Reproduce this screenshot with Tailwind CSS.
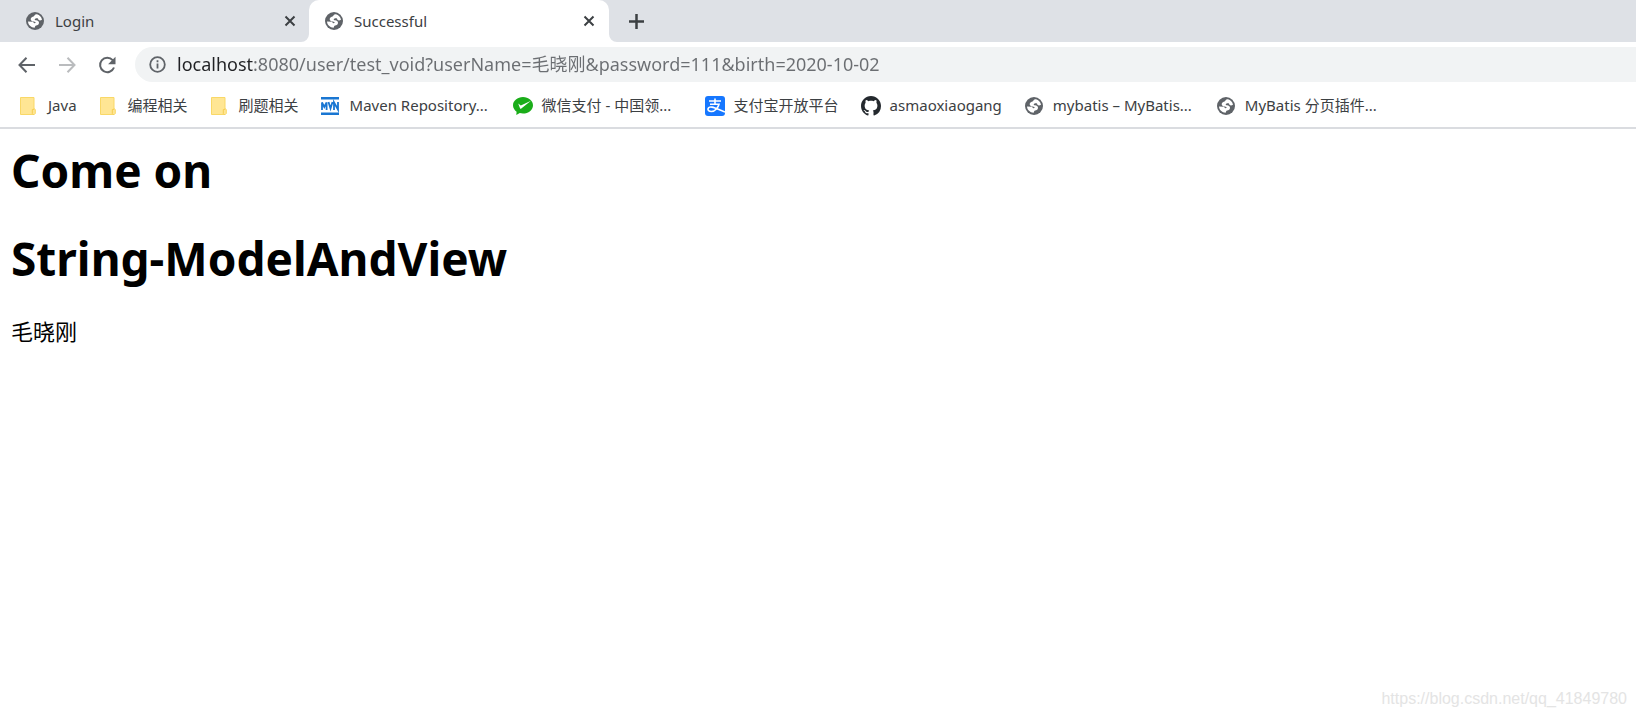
<!DOCTYPE html>
<html lang="zh-CN">
<head>
    <meta charset="UTF-8">
    <meta name="viewport" content="width=device-width, initial-scale=1.0">
    <title>Successful</title>
    <script src="https://cdn.jsdelivr.net/npm/@tailwindcss/browser@4"></script>
</head>
<body class="min-h-screen flex flex-col bg-white font-['Noto_Sans','Noto_Sans_CJK_SC',sans-serif] text-[#3c4043]">
    <!-- Shared icons -->
    <svg class="hidden">
        <symbol id="globe" viewBox="0 0 18 18">
            <circle cx="9" cy="9" r="9" fill="#5f6368"/>
            <path fill="#fff" d="M11 2.300C13.500 3 15.500 5 16 7.800c-1.200.8-2.500.9-3.300.3-.6-.6-.4-1.500-1.200-1.800-.9-.3-2.200.1-2.700.9-.3.6.3 1 1.200 1.100 1.700.2 3 .9 3 2.400 0 1.800-1.400 2.400-2.900 2.700-.9.200-1 1.200-1.500 2.300C5 15.500 2.200 13 2 9.500l4.500.2c.8.100 1 .9 1.600 1.300.7.500 1.600.1 1.500-.7-.2-.8-1.600-.6-2.800-.9C5.300 9 4.300 8 4.800 6.600c.4-1.200 1.700-1.500 2.700-2C8.500 4 8.600 2 11 2.300z"/>
        </symbol>
        <symbol id="close" viewBox="0 0 12 12">
            <path d="M1.500 1.500l9 9M10.500 1.500l-9 9" stroke="#3c4043" stroke-width="2"/>
        </symbol>
        <symbol id="folder" viewBox="0 0 20 20">
            <path fill="#ffe694" stroke="#f9d867" d="M1.500 1.500h13.500v11l1.300 1v4l-1 1H1.500z"/>
            <path fill="none" stroke="#f5cc50" d="M14.800 12.500v1h-1.500v4l1 1"/>
        </symbol>
    </svg>

    <!-- Tab strip -->
    <header class="h-[42px] shrink-0 flex bg-[#dee1e6]">
        <div class="w-[309px] flex items-center pl-[26px] pr-[13px]">
            <svg class="size-[18px]"><use href="#globe"/></svg>
            <span class="grow pl-[11px] text-[15px]">Login</span>
            <button type="button" aria-label="Close Login"><svg class="size-3"><use href="#close"/></svg></button>
        </div>
        <div class="relative w-[300px] flex items-center pl-4 pr-[14px] bg-white rounded-t-[10px]">
            <svg class="absolute right-full bottom-0 size-2" viewBox="0 0 8 8"><path fill="#fff" d="M8 0v8H0a8 8 0 0 0 8-8z"/></svg>
            <svg class="size-[18px]"><use href="#globe"/></svg>
            <span class="grow pl-[11px] text-[15px]">Successful</span>
            <button type="button" aria-label="Close Successful"><svg class="size-3"><use href="#close"/></svg></button>
            <svg class="absolute left-full bottom-0 size-2" viewBox="0 0 8 8"><path fill="#fff" d="M0 0v8h8a8 8 0 0 1-8-8z"/></svg>
        </div>
        <button type="button" aria-label="New tab" class="ml-5">
            <svg class="size-[15px]" viewBox="0 0 15 15"><path d="M7.500 0v15M0 7.500h15" stroke="#3c4043" stroke-width="2.500"/></svg>
        </button>
    </header>

    <!-- Toolbar -->
    <div class="flex items-center pl-[18px] py-[5px]">
        <button type="button" aria-label="Back">
            <svg class="w-[17px] h-4" viewBox="0 0 17 16" fill="none" stroke="#5f6368" stroke-width="2"><path d="M8.500.8L1.500 8l7 7.200M1.500 8H17"/></svg>
        </button>
        <button type="button" aria-label="Forward" class="ml-6">
            <svg class="w-[17px] h-4" viewBox="0 0 17 16" fill="none" stroke="#babcbe" stroke-width="2"><path d="M8.500.8l7 7.200-7 7.200M15.500 8H0"/></svg>
        </button>
        <button type="button" aria-label="Reload" class="ml-[22px]">
            <svg class="w-[18px] h-[18px]" viewBox="0 0 18 18"><path d="M14.700 4.200A7.200 7.200 0 1 0 16 11.500" fill="none" stroke="#5f6368" stroke-width="2"/><path d="M17.500.8v7.400h-7.400z" fill="#5f6368"/></svg>
        </button>
        <div class="grow h-[35px] ml-[19px] pl-[14px] flex items-center bg-[#f1f3f4] rounded-l-full">
            <svg class="size-[17px] shrink-0" viewBox="0 0 17 17"><circle cx="8.500" cy="8.500" r="7.300" fill="none" stroke="#5f6368" stroke-width="1.800"/><path d="M8.500 7.500v5M8.500 4.300v1.900" stroke="#5f6368" stroke-width="1.800"/></svg>
            <input type="text" aria-label="Address" value="localhost:8080/user/test_void?userName=毛晓刚&amp;password=111&amp;birth=2020-10-02"
                class="grow ml-[11px] text-[18px] outline-none text-transparent bg-clip-text bg-[linear-gradient(to_right,#202124_76px,#6b6e72_76px)]">
        </div>
    </div>

    <!-- Bookmarks bar -->
    <nav class="h-[42px] flex items-center gap-[22px] pl-[19px] pb-[3px] border-b-2 border-[#dadce0] text-[15px] whitespace-nowrap">
        <a href="#" class="flex items-center gap-[9px]"><svg class="size-5"><use href="#folder"/></svg>Java</a>
        <a href="#" class="flex items-center gap-[9px]"><svg class="size-5"><use href="#folder"/></svg>编程相关</a>
        <a href="#" class="flex items-center gap-[9px]"><svg class="size-5"><use href="#folder"/></svg>刷题相关</a>
        <a href="#" class="w-[170px] flex items-center gap-[9px]">
            <svg class="size-5 shrink-0" viewBox="0 0 20 20" fill="none" stroke="#1976d2"><path stroke-width="2.500" d="M0 2.200h18M0 17.800h18"/><path stroke-width="1.800" d="M1 14V6.500L3.300 11l2.300-4.500V14M7.500 6l2 6.500 2-6.500M13 14V6.500l4 7V6"/></svg>
            Maven Repository...
        </a>
        <a href="#" class="w-[170px] flex items-center gap-[9px]">
            <svg class="size-5 shrink-0" viewBox="0 0 20 20"><path fill="#1aad19" d="M10 1C4.500 1 0 4.700 0 9.300c0 2.600 1.400 4.900 3.600 6.400L3.300 19l3.500-1.900c1 .3 2.100.5 3.200.5 5.500 0 10-3.700 10-8.300S15.500 1 10 1z"/><path fill="#fff" d="M5.200 7.500l2.600 1.900L18 4.700 8.300 12.500c-.5.400-1 .3-1.300-.3z"/></svg>
            微信支付 - 中国领...
        </a>
        <a href="#" class="flex items-center gap-[9px]">
            <svg class="size-5 shrink-0" viewBox="0 0 20 20"><rect width="20" height="20" rx="3" fill="#1677ff"/><path fill="none" stroke="#fff" stroke-width="1.600" d="M4 5h12M10 2.500v6M5 8.300h9c-.8 3-3.500 7.200-7.700 7.200-2.500 0-3.500-1.300-3.300-2.500.3-1.500 2-2.200 4-1.900 3.500.6 7.500 2.900 13 5"/></svg>
            支付宝开放平台
        </a>
        <a href="#" class="flex items-center gap-[9px]">
            <svg class="size-5 shrink-0" viewBox="0 0 16 16"><path fill="#24292e" d="M8 0C3.580 0 0 3.580 0 8c0 3.540 2.290 6.530 5.470 7.590.4.070.55-.17.55-.38 0-.19-.01-.82-.01-1.490-2.010.37-2.530-.49-2.690-.94-.09-.23-.48-.94-.82-1.130-.28-.15-.68-.52-.01-.53.63-.01 1.080.58 1.230.82.72 1.210 1.870.87 2.330.66.070-.52.28-.87.51-1.070-1.780-.2-3.640-.89-3.640-3.950 0-.87.31-1.590.82-2.150-.08-.2-.36-1.020.08-2.120 0 0 .67-.21 2.200.82.64-.18 1.320-.27 2-.27s1.360.09 2 .27c1.530-1.040 2.200-.82 2.200-.82.44 1.100.16 1.920.08 2.120.51.56.82 1.270.82 2.150 0 3.070-1.870 3.750-3.650 3.950.29.25.54.73.54 1.480 0 1.070-.01 1.930-.01 2.200 0 .21.15.46.55.38A8.010 8.010 0 0 0 16 8c0-4.420-3.580-8-8-8z"/></svg>
            asmaoxiaogang
        </a>
        <a href="#" class="w-[170px] flex items-center gap-[9px]"><svg class="size-[18px] mx-px shrink-0"><use href="#globe"/></svg>mybatis – MyBatis...</a>
        <a href="#" class="flex items-center gap-[9px]"><svg class="size-[18px] mx-px shrink-0"><use href="#globe"/></svg>MyBatis 分页插件...</a>
    </nav>

    <!-- Page -->
    <main class="grow flex flex-col px-[11px] pt-[11px] text-black">
        <h1 class="text-[46px] leading-[60px] font-bold">Come on</h1>
        <h1 class="mt-7 text-[46px] leading-[60px] font-bold">String-ModelAndView</h1>
        <p class="mt-7 text-[22px] leading-[30px]">毛晓刚</p>
    </main>
    <footer class="px-[9px] pb-[6px] text-right font-['Liberation_Sans',sans-serif] text-[16px] text-[#e4e4e4]">https://blog.csdn.net/qq_41849780</footer>
</body>
</html>
